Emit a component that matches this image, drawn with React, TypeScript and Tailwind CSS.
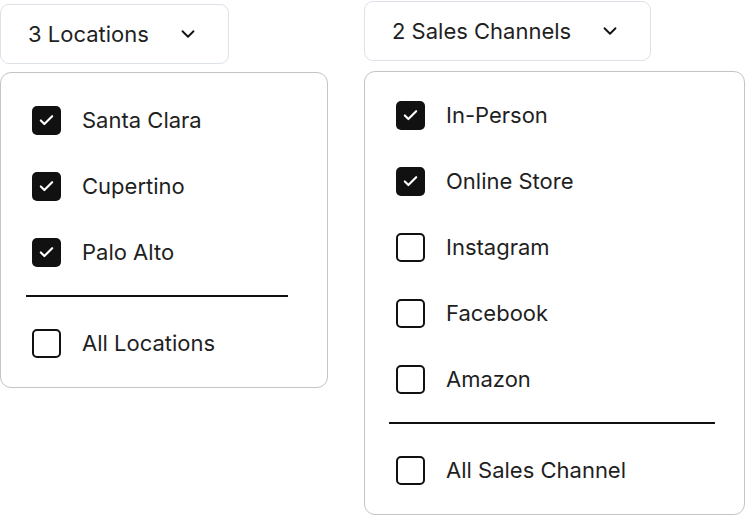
import { Check, ChevronDown } from "lucide-react";

type Option = { label: string; checked: boolean };

const locations: Option[] = [
    { label: "Santa Clara", checked: true },
    { label: "Cupertino", checked: true },
    { label: "Palo Alto", checked: true },
];

const channels: Option[] = [
    { label: "In-Person", checked: true },
    { label: "Online Store", checked: true },
    { label: "Instagram", checked: false },
    { label: "Facebook", checked: false },
    { label: "Amazon", checked: false },
];

function Box({ checked }: { checked: boolean }) {
    return checked ? (
        <span className="flex h-[29px] w-[29px] shrink-0 items-center justify-center rounded-[5px] bg-[#111111]">
            <Check className="h-[17px] w-[17px] text-white" strokeWidth={3} />
        </span>
    ) : (
        <span className="h-[29px] w-[29px] shrink-0 rounded-[5px] border-2 border-[#111111] bg-white" />
    );
}

function Row({ option }: { option: Option }) {
    return (
        <div className="flex h-[66px] items-center gap-[21px] pl-[31px]">
            <Box checked={option.checked} />
            <span className="text-[22px] text-[#1f1f1f]">{option.label}</span>
        </div>
    );
}

function Trigger({ label }: { label: string }) {
    return (
        <div className="flex h-[60px] items-center gap-7 rounded-[9px] border border-[#dde2e8] bg-white pl-[27px] pr-[29px]">
            <span className="text-[22px] text-[#1f1f1f]">{label}</span>
            <ChevronDown className="h-[22px] w-[22px] text-[#111111]" strokeWidth={2} />
        </div>
    );
}

export default function App() {
    return (
        <div className="flex h-[516px] w-[746px] gap-[36px] bg-white font-['Inter',sans-serif]">
            {/* Locations */}
            <div className="flex w-[328px] flex-col">
                <div className="mt-1 flex">
                    <Trigger label="3 Locations" />
                </div>
                <div className="mt-2 rounded-[11px] border-[1.5px] border-[#c4c4c4] pt-[14px] pb-[11px]">
                    {locations.map((o) => (
                        <Row key={o.label} option={o} />
                    ))}
                    <div className="mt-[10px] mb-[13px] ml-[25px] h-[2px] w-[262px] bg-[#111111]" />
                    <Row option={{ label: "All Locations", checked: false }} />
                </div>
            </div>

            {/* Sales channels */}
            <div className="flex w-[381px] flex-col">
                <div className="mt-px flex">
                    <Trigger label="2 Sales Channels" />
                </div>
                <div className="mt-[10px] rounded-[11px] border-[1.5px] border-[#c4c4c4] pt-[10px] pb-[11px]">
                    {channels.map((o) => (
                        <Row key={o.label} option={o} />
                    ))}
                    <div className="mt-[10px] mb-[13px] ml-[24px] h-[2px] w-[326px] bg-[#111111]" />
                    <Row option={{ label: "All Sales Channel", checked: false }} />
                </div>
            </div>
        </div>
    );
}
